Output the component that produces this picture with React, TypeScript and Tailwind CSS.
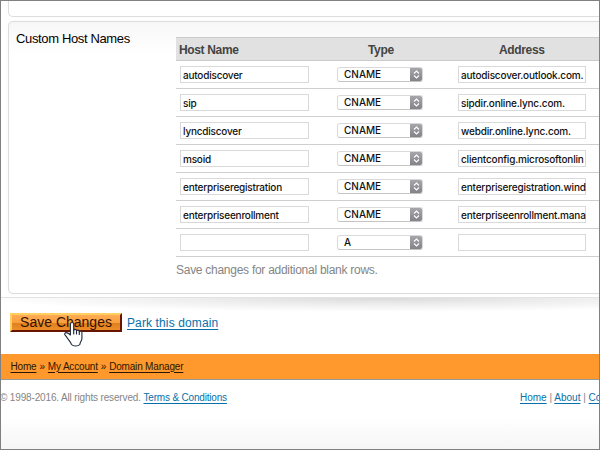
import React from "react";

type HostRow = { host: string; type: string; address: string };

const rows: HostRow[] = [
  { host: "autodiscover", type: "CNAME", address: "autodiscover.outlook.com." },
  { host: "sip", type: "CNAME", address: "sipdir.online.lync.com." },
  { host: "lyncdiscover", type: "CNAME", address: "webdir.online.lync.com." },
  { host: "msoid", type: "CNAME", address: "clientconfig.microsoftonlin" },
  { host: "enterpriseregistration", type: "CNAME", address: "enterpriseregistration.wind" },
  { host: "enterpriseenrollment", type: "CNAME", address: "enterpriseenrollment.mana" },
  { host: "", type: "A", address: "" },
];

function Field({ value, className }: { value: string; className: string }) {
  return (
    <div
      className={
        "flex h-[17px] items-center border border-[#d9d9d9] bg-white pl-[2px] font-['Inter',sans-serif] text-[10px] leading-[15px] font-medium whitespace-nowrap text-[#111] " +
        className
      }
    >
      <span className="relative top-px">{value}</span>
    </div>
  );
}

function Select({ value }: { value: string }) {
  return (
    <div className="flex h-[15px] w-[86px] overflow-hidden rounded-[3px] border border-[#dadada] border-b-[#c4c4c4] bg-white font-['Inter',sans-serif] text-[10px] leading-[13px] font-medium text-[#111]">
      <span className="flex-1 pl-[6px]">{value}</span>
      <span className="-my-px -mr-px flex h-[15px] w-[13px] items-center justify-center bg-gradient-to-b from-[#a9a9ad] to-[#808086]">
        <svg width="7" height="9" viewBox="0 0 7 9" fill="none" stroke="#fff" strokeWidth="1.1">
          <path d="M1 3.5 3.5 1 6 3.5M1 5.5 3.5 8 6 5.5" />
        </svg>
      </span>
    </div>
  );
}

function Link({ children, className = "" }: { children: React.ReactNode; className?: string }) {
  return <a className={"underline underline-offset-2 " + className}>{children}</a>;
}

export default function App() {
  return (
    <div className="relative flex h-[450px] w-[600px] flex-col overflow-hidden border border-[#808080] bg-white font-['Liberation_Sans',Arial,sans-serif]">
      <div className="ml-[7px] h-[16px] w-[640px] shrink-0 rounded-bl-[5px] border-b border-l border-[#dedede] shadow-[0_0_1px_#e5e5e5]" />

      <section className="mt-[4px] ml-[7px] flex h-[273px] w-[640px] shrink-0 rounded-[5px] border border-[#dcdcdc] bg-gradient-to-b from-[#f7f7f7] to-white to-[34px] shadow-[0_0_1px_#e0e0e0]">
        <h2 className="w-[167px] shrink-0 pt-[9px] pl-[7px] text-[13px] leading-[16px] tracking-[-0.36px] text-black">
          Custom Host Names
        </h2>
        <div className="flex-1 pt-[15px]">
          <div className="flex h-[24px] items-center border-t border-b border-t-[#cbcbcb] border-b-[#cbcbcb] bg-[#e1e1e1] text-[12px] font-bold tracking-[-0.35px] text-[#444]">
            <span className="relative top-px w-[192px] pl-[3px]">Host Name</span>
            <span className="relative top-px w-[131px]">Type</span>
            <span className="relative top-px">Address</span>
          </div>
          {rows.map((r, i) => (
            <div key={i} className="flex h-[28px] items-center border-b border-[#cfcfcf]">
              <div className="w-[161px] pl-[4px]">
                <Field value={r.host} className="w-[129px] tracking-[-0.21px]" />
              </div>
              <div className="w-[121px]">
                <Select value={r.type} />
              </div>
              <Field value={r.address} className="w-[128px] tracking-[-0.18px]" />
            </div>
          ))}
          <p className="mt-[5px] text-[12px] leading-[16px] tracking-[-0.27px] text-[#858585]">
            Save changes for additional blank rows.
          </p>
        </div>
      </section>

      <div className="mt-[3px] h-[14px] shrink-0 border-t border-[#e2e2e2] bg-[radial-gradient(ellipse_400px_14px_at_380px_0px,#dadada,#ededed_45%,#ffffff)]" />

      <div className="mt-[2px] ml-[9px] flex h-[19px] shrink-0 items-center">
        <button className="h-[19px] w-[112px] border-2 border-t-[#ffcf62] border-r-[#681500] border-b-[#681500] border-l-[#ffcf62] bg-[linear-gradient(#ffac55_0%,#fa9f3c_52%,#dc8020_53%,#ef8e28_100%)] text-[14px] leading-[15px] text-[#371000]">
          Save Changes
        </button>
        <Link className="ml-[5px] text-[12px] tracking-[0.12px] text-[#0870a8]">Park this domain</Link>
      </div>

      <nav className="mt-[22px] flex h-[26px] shrink-0 items-center gap-[3px] border-b border-[#949b98] bg-[#ff992d] pl-[9.500px] text-[10px] leading-[14px] tracking-[-0.18px] text-[#2c1600]">
        <Link>Home</Link>
        <span>»</span>
        <Link>My Account</Link>
        <span>»</span>
        <Link>Domain Manager</Link>
      </nav>

      <footer className="flex flex-1 items-start justify-between bg-gradient-to-b from-white from-55% to-[#f5f5f5] pt-[11px] text-[10px] leading-[14px] whitespace-nowrap text-[#858585]">
        <div className="-ml-px tracking-[-0.15px]">
          © 1998-2016. All rights reserved.{" "}
          <Link className="tracking-[-0.18px] text-[#0870a8]">Terms &amp; Conditions</Link>
        </div>
        <div className="w-[79px]">
          <Link className="text-[#0870a8]">Home</Link> | <Link className="text-[#0870a8]">About</Link> |{" "}
          <Link className="text-[#0870a8]">Co</Link>
        </div>
      </footer>

      <svg className="absolute top-[320px] left-[62px]" width="21" height="27" viewBox="0 0 20 26">
        <path
          d="M7 13.500V3.200C7 .9 10.200.9 10.200 3.200V9c.4-1.400 2.600-1.200 2.700.4.6-1 2.600-.8 2.700.8.8-.8 2.500-.4 2.500 1.200v5.200c0 2.600-1.800 3.600-2 6-1.400 2-6.600 2-8 0-.8-2.400-3-4.400-4.200-6.400C2.600 14.200 1 13.200 1.500 12.200c1-1.800 3.700-.8 5.500 1.300z"
          fill="#fff"
          stroke="#222c3d"
          strokeWidth="1.1"
          strokeLinejoin="round"
        />
        <path
          d="M10.200 9v3.500M12.900 9.500v3M15.600 10.500v2.500"
          fill="none"
          stroke="#222c3d"
          strokeWidth="1.1"
          strokeLinecap="round"
        />
      </svg>
    </div>
  );
}
